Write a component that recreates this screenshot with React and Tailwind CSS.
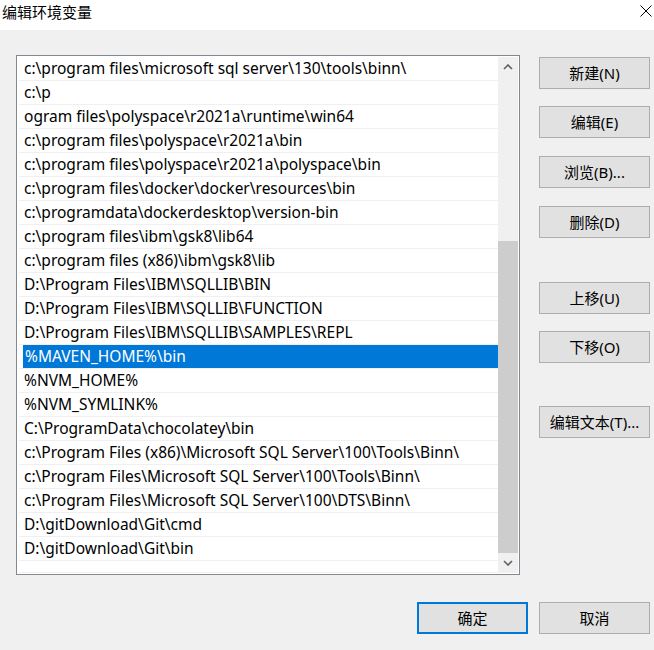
import React, { useState } from 'react';

const PATHS = [
  'c:\\program files\\microsoft sql server\\130\\tools\\binn\\',
  'c:\\p',
  'ogram files\\polyspace\\r2021a\\runtime\\win64',
  'c:\\program files\\polyspace\\r2021a\\bin',
  'c:\\program files\\polyspace\\r2021a\\polyspace\\bin',
  'c:\\program files\\docker\\docker\\resources\\bin',
  'c:\\programdata\\dockerdesktop\\version-bin',
  'c:\\program files\\ibm\\gsk8\\lib64',
  'c:\\program files (x86)\\ibm\\gsk8\\lib',
  'D:\\Program Files\\IBM\\SQLLIB\\BIN',
  'D:\\Program Files\\IBM\\SQLLIB\\FUNCTION',
  'D:\\Program Files\\IBM\\SQLLIB\\SAMPLES\\REPL',
  '%MAVEN_HOME%\\bin',
  '%NVM_HOME%',
  '%NVM_SYMLINK%',
  'C:\\ProgramData\\chocolatey\\bin',
  'c:\\Program Files (x86)\\Microsoft SQL Server\\100\\Tools\\Binn\\',
  'c:\\Program Files\\Microsoft SQL Server\\100\\Tools\\Binn\\',
  'c:\\Program Files\\Microsoft SQL Server\\100\\DTS\\Binn\\',
  'D:\\gitDownload\\Git\\cmd',
  'D:\\gitDownload\\Git\\bin',
];

const font = { fontFamily: '"Noto Sans", "Noto Sans CJK SC", sans-serif' };

const Button = ({ children, primary = false, className = '' }) => (
  <button
    type="button"
    className={`w-[111px] h-[32px] bg-[#e1e1e1] text-[15px] text-black leading-none ${
      primary ? 'border-2 border-[#0078d7]' : 'border border-[#adadad]'
    } ${className}`}
  >
    {children}
  </button>
);

const Chevron = ({ down = false }) => (
  <svg width="10" height="6" viewBox="0 0 10 6" className="block">
    <path
      d={down ? 'M1 1 L5 5 L9 1' : 'M1 5 L5 1 L9 5'}
      fill="none"
      stroke="#606060"
      strokeWidth="1.6"
    />
  </svg>
);

export default function App() {
  const [selected, setSelected] = useState(12);

  return (
    <div className="w-[654px] h-[650px] flex flex-col bg-[#f0f0f0] overflow-hidden" style={font}>
      <div className="h-[30px] bg-white flex items-center justify-between pl-[2px] pr-[2px]">
        <span className="text-[15px] text-black -mt-[6px]">编辑环境变量</span>
        <svg width="12" height="12" viewBox="0 0 12 12" className="-mt-[8px]">
          <path d="M0.5 0.5 L11.5 11.5 M11.5 0.5 L0.5 11.5" stroke="#000" strokeWidth="1" />
        </svg>
      </div>

      <div className="flex pl-[16px] pt-[25px]">
        <div className="w-[504px] h-[520px] border border-[#828790] bg-white flex p-px">
          <ul className="flex-1 flex flex-col pl-px">
            {PATHS.map((p, i) => (
              <li
                key={i}
                onClick={() => setSelected(i)}
                className="h-[24px] border-b border-[#f0f0f0] flex"
              >
                <div
                  className={`h-[23px] flex-1 flex items-center pt-px text-[15.5px] whitespace-nowrap overflow-hidden ${
                    i === selected ? 'bg-[#0078d7] text-white ml-[4px] pl-[2px]' : 'text-black pl-[5px]'
                  }`}
                >
                  {p}
                </div>
              </li>
            ))}
            <li className="h-[24px] border-b border-[#f0f0f0]" />
          </ul>
          <div className="w-[20px] bg-[#f0f0f0] flex flex-col">
            <div className="h-[20px] flex items-center justify-center">
              <Chevron />
            </div>
            <div className="h-[164px]" />
            <div className="flex-1 bg-[#cdcdcd]" />
            <div className="h-[20px] flex items-center justify-center">
              <Chevron down />
            </div>
          </div>
        </div>

        <div className="ml-[19px] pt-[2px] flex flex-col">
          <Button>新建(N)</Button>
          <Button className="mt-[17px]">编辑(E)</Button>
          <Button className="mt-[18px]">浏览(B)...</Button>
          <Button className="mt-[18px]">删除(D)</Button>
          <Button className="mt-[44px]">上移(U)</Button>
          <Button className="mt-[17px]">下移(O)</Button>
          <Button className="mt-[43px]">编辑文本(T)...</Button>
        </div>
      </div>

      <div className="flex justify-end gap-[11px] pr-[4px] mt-[27px]">
        <Button primary>确定</Button>
        <Button>取消</Button>
      </div>
    </div>
  );
}
